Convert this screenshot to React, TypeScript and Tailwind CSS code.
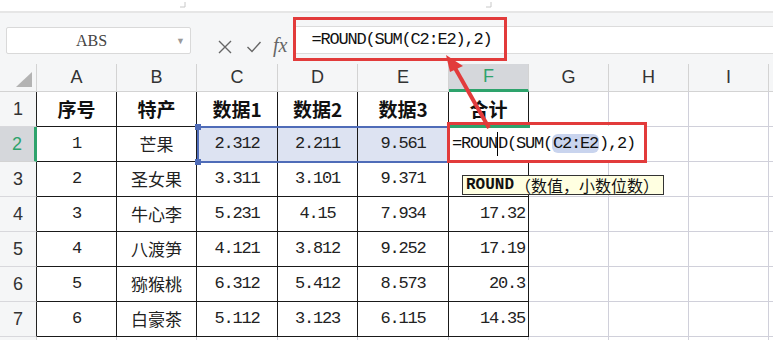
const cols = ['A', 'B', 'C', 'D', 'E', 'F', 'G', 'H', 'I', 'J']

type Cell = { v: string; kind?: 'cjk' | 'num' | 'head'; align?: 'right' }

const rows: Cell[][] = [
  [
    { v: '序号', kind: 'head' },
    { v: '特产', kind: 'head' },
    { v: '数据1', kind: 'head' },
    { v: '数据2', kind: 'head' },
    { v: '数据3', kind: 'head' },
    { v: '合计', kind: 'head' },
  ],
  [{ v: '1', kind: 'num' }, { v: '芒果', kind: 'cjk' }, { v: '2.312', kind: 'num' }, { v: '2.211', kind: 'num' }, { v: '9.561', kind: 'num' }, { v: '' }],
  [{ v: '2', kind: 'num' }, { v: '圣女果', kind: 'cjk' }, { v: '3.311', kind: 'num' }, { v: '3.101', kind: 'num' }, { v: '9.371', kind: 'num' }, { v: '' }],
  [{ v: '3', kind: 'num' }, { v: '牛心李', kind: 'cjk' }, { v: '5.231', kind: 'num' }, { v: '4.15', kind: 'num' }, { v: '7.934', kind: 'num' }, { v: '17.32', kind: 'num', align: 'right' }],
  [{ v: '4', kind: 'num' }, { v: '八渡笋', kind: 'cjk' }, { v: '4.121', kind: 'num' }, { v: '3.812', kind: 'num' }, { v: '9.252', kind: 'num' }, { v: '17.19', kind: 'num', align: 'right' }],
  [{ v: '5', kind: 'num' }, { v: '猕猴桃', kind: 'cjk' }, { v: '6.312', kind: 'num' }, { v: '5.412', kind: 'num' }, { v: '8.573', kind: 'num' }, { v: '20.3', kind: 'num', align: 'right' }],
  [{ v: '6', kind: 'num' }, { v: '白豪茶', kind: 'cjk' }, { v: '5.112', kind: 'num' }, { v: '3.123', kind: 'num' }, { v: '6.115', kind: 'num' }, { v: '14.35', kind: 'num', align: 'right' }],
  [],
]

const mono = "font-['Liberation_Mono','Noto_Sans_CJK_SC',monospace]"
const cjk = "font-['Noto_Sans_CJK_SC',sans-serif]"

function Formula({ pill }: { pill?: boolean }) {
  return (
    <span className={`${mono} text-[17px] tracking-[-1.2px] text-[#111] whitespace-pre`}>
      =ROUN
      {pill && <span className="inline-block h-[24px] w-px bg-black align-middle" />}
      D(SUM(
      <span className={pill ? 'rounded-[6px] bg-[#c9d4ee] px-[1px]' : ''}>C2:E2</span>
      ),2)
    </span>
  )
}

export default function App() {
  return (
    <div className="relative h-[340px] w-[773px] overflow-hidden bg-white text-[#222]">
      {/* top strip */}
      <div className="relative h-[11px] bg-white">
        <svg className="absolute left-[179px] top-[1px]" width="7" height="7">
          <path d="M6 1v5H1" fill="none" stroke="#c8c8c8" strokeWidth="1" />
        </svg>
        <svg className="absolute left-[485px] top-[1px]" width="7" height="7">
          <path d="M6 1v5H1" fill="none" stroke="#c8c8c8" strokeWidth="1" />
        </svg>
      </div>
      <div className="h-[2px] bg-[#e6e6e6]" />

      {/* formula toolbar */}
      <div className="flex h-[51px] items-start bg-[#f5f6f7] pt-[13px]">
        <div className="ml-[6px] mt-[1px] flex h-[27px] w-[185px] items-center rounded-[2px] border border-[#d9d9d9] bg-white">
          <span className="flex-1 text-center font-['Liberation_Serif',serif] text-[16px] text-[#444]">ABS</span>
          <span className="mr-[5px] text-[9px] text-[#9a9a9a]">▼</span>
        </div>
        <div className="ml-[26px] mt-[7px] flex items-center">
          <svg width="16" height="16" viewBox="0 0 16 16">
            <path d="M2 2l12 12M14 2L2 14" stroke="#666" strokeWidth="1.4" fill="none" />
          </svg>
          <svg className="ml-[13px]" width="16" height="14" viewBox="0 0 16 14">
            <path d="M1.5 7l4.5 4.5L14.5 2" stroke="#666" strokeWidth="1.4" fill="none" />
          </svg>
          <span className="ml-[11px] -mt-[3px] font-['Liberation_Serif',serif] text-[20px] italic text-[#666]">fx</span>
        </div>
        <div className="ml-[9px] flex h-[28px] flex-1 items-center border-y border-[#dcdcdc] bg-white pl-[15px]">
          <Formula />
        </div>
      </div>

      {/* grid */}
      <div className="grid grid-cols-[37px_80px_80px_81px_80px_91px_80px_80px_80px_80px_80px] grid-rows-[28px_repeat(8,35px)]">
        <div className="flex items-end justify-end border-b border-r border-[#d3d3d3] bg-[#f5f6f7] pb-[4px] pr-[4px]">
          <svg width="16" height="15">
            <path d="M16 0V15H0Z" fill="#b3b3b3" />
          </svg>
        </div>
        {cols.map((c) => (
          <div
            key={c}
            className={`flex items-center justify-center border-r font-['Liberation_Sans',sans-serif] text-[18px] ${
              c === 'F'
                ? 'border-b-[3px] border-b-[#2ea36c] border-r-[#d3d3d3] bg-[#d5d7db] text-[#2ea36c]'
                : 'border-b border-[#d3d3d3] bg-[#f5f6f7] text-[#333]'
            }`}
          >
            {c === 'J' ? '' : c}
          </div>
        ))}
        {rows.map((row, ri) => {
          const r = ri + 1
          const inTable = r <= 7
          return [
            <div
              key={`h${r}`}
              className={`flex items-center justify-center border-b font-['Liberation_Sans',sans-serif] text-[18px] ${
                r === 2
                  ? 'border-r-[3px] border-r-[#2ea36c] border-b-[#d3d3d3] bg-[#d5d7db] text-[#2ea36c]'
                  : `border-r border-b-[#d8d8dc] bg-[#f5f6f7] text-[#333] ${inTable ? 'border-r-[#222]' : 'border-r-[#d3d3d3]'}`
              }`}
            >
              {inTable ? r : ''}
            </div>,
            ...cols.map((c, ci) => {
              const cell = row[ci]
              const table = inTable && ci < 6
              const sel = r === 2 && ci >= 2 && ci <= 4
              let txt = ''
              if (cell?.kind === 'head') txt = `${cjk} text-[19px] font-bold text-[#111]`
              else if (cell?.kind === 'cjk') txt = `${cjk} text-[17px] text-[#222]`
              else if (cell?.kind === 'num') txt = `${mono} text-[17px] tracking-[-1.2px] text-[#222]`
              return (
                <div
                  key={`${c}${r}`}
                  className={`flex items-center border-b border-r ${
                    cell?.align === 'right' ? 'justify-end pr-[3px]' : 'justify-center'
                  } ${table ? 'border-[#1a1a1a]' : 'border-[#d0d0da]'} ${sel ? 'bg-[#dde3f2]' : ''} ${txt}`}
                >
                  {cell?.v}
                </div>
              )
            }),
          ]
        })}
      </div>

      {/* selection C2:E2 */}
      <div className="absolute left-[197px] top-[126px] h-[37px] w-[252px] border-2 border-[#4f6cb8]" />
      <div className="absolute left-[195px] top-[124px] size-[6px] bg-[#4f6cb8]" />
      <div className="absolute left-[195px] top-[159px] size-[6px] bg-[#4f6cb8]" />

      {/* editing cell F2 */}
      <div className="absolute left-[449px] top-[126px] flex h-[36px] w-[197px] items-center bg-white pl-[3px]">
        <Formula pill />
      </div>
      <div className="absolute left-[449px] top-[125px] h-[3px] w-[81px] bg-[#2ea36c]" />
      <div className="absolute left-[449px] top-[160px] h-[3px] w-[81px] bg-[#2ea36c]" />
      <div className="absolute left-[447px] top-[122px] h-[41px] w-[200px] border-[3px] border-[#e23b3b]" />

      {/* formula bar highlight */}
      <div className="absolute left-[293px] top-[17px] h-[44px] w-[214px] border-[3px] border-[#e23b3b]" />

      {/* tooltip */}
      <div className="absolute left-[462px] top-[175px] flex h-[20px] w-[202px] items-center border border-[#333] bg-[#ffffe1] pl-[3px] leading-none text-[#111]">
        <span className={`${mono} font-bold text-[16px]`}>ROUND</span>
        <span className={`${cjk} ml-[1px] whitespace-pre text-[16px]`}>（数值，小数位数）</span>
      </div>

      {/* arrow */}
      <svg className="pointer-events-none absolute left-0 top-0" width="773" height="340">
        <path d="M489 128L455 68" stroke="#e23b3b" strokeWidth="4" fill="none" />
        <path d="M446 55L463 66L450 72Z" fill="#e23b3b" />
      </svg>
    </div>
  )
}
